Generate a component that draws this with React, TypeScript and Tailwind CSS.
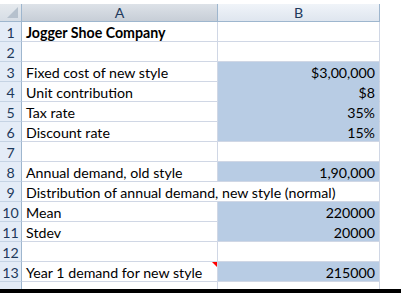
import React from "react";

type Row = { n: number; a?: string; b?: string; fill?: boolean; bold?: boolean; span?: boolean; note?: boolean };

const rows: Row[] = [
  { n: 1, a: "Jogger Shoe Company", bold: true },
  { n: 2 },
  { n: 3, a: "Fixed cost of new style", b: "$3,00,000", fill: true },
  { n: 4, a: "Unit contribution", b: "$8", fill: true },
  { n: 5, a: "Tax rate", b: "35%", fill: true },
  { n: 6, a: "Discount rate", b: "15%", fill: true },
  { n: 7 },
  { n: 8, a: "Annual demand, old style", b: "1,90,000", fill: true },
  { n: 9, a: "Distribution of annual demand, new style (normal)", span: true },
  { n: 10, a: "Mean", b: "220000", fill: true },
  { n: 11, a: "Stdev", b: "20000", fill: true },
  { n: 12 },
  { n: 13, a: "Year 1 demand for new style", b: "215000", fill: true, note: true },
];

export default function App() {
  const font = { fontFamily: "Lato, 'Liberation Sans', sans-serif" };
  return (
    <div className="w-[401px] h-[293px] bg-white flex flex-col overflow-hidden text-[14.2px] text-black" style={font}>
      <div className="h-[4px]" />
      <div className="grid grid-cols-[22px_196px_162px] w-[380px]">
        {/* header */}
        <div className="relative h-[18px] bg-gradient-to-b from-[#e6eaee] to-[#d6dde5] border-r border-b border-[#9eb6ce]">
          <div className="absolute right-[3px] bottom-[3px] w-0 h-0 border-l-[11px] border-l-transparent border-b-[11px] border-b-[#b6c1cd]" />
        </div>
        <div className="h-[18px] flex items-end justify-center bg-gradient-to-b from-[#dde2e8] to-[#c7ced7] border-r border-b border-[#9eb6ce] text-[#1e395b] leading-none">
          <span className="mb-[1px]">A</span>
        </div>
        <div className="h-[18px] flex items-end justify-center bg-gradient-to-b from-[#f0f4f9] to-[#dfe6ef] border-r border-b border-[#9eb6ce] text-[#1e395b] leading-none">
          <span className="mb-[1px]">B</span>
        </div>

        {rows.map((r, i) => {
          const next = rows[i + 1];
          const bottomFill = r.fill && next && next.fill;
          return (
            <React.Fragment key={r.n}>
              <div className="h-[20px] flex items-end justify-center bg-[#e4ecf7] border-r border-b border-r-[#9eb6ce] border-b-[#c5d3e4] text-[#1e395b] leading-none">
                <span className="mb-[1px]">{r.n}</span>
              </div>
              {r.span ? (
                <div className="col-span-2 h-[20px] flex items-end pl-[4px] border-r border-b border-[#d0d7e5] whitespace-nowrap leading-none">
                  <span className="mb-[1px]">{r.a}</span>
                </div>
              ) : (
                <>
                  <div className="relative h-[20px] flex items-end pl-[4px] border-r border-b border-[#d0d7e5] whitespace-nowrap leading-none">
                    <span className={`mb-[1px] ${r.bold ? "font-bold" : ""}`}>{r.a}</span>
                    {r.note && (
                      <div className="absolute right-0 top-0 w-0 h-0 border-l-[5px] border-l-transparent border-t-[5px] border-t-[#ff0000]" />
                    )}
                  </div>
                  <div
                    className={`h-[20px] flex items-end justify-end pr-[4px] border-r border-b border-r-[#d0d7e5] leading-none ${
                      r.fill ? "bg-[#b8cce4]" : ""
                    } ${bottomFill ? "border-b-[#b8cce4]" : "border-b-[#d0d7e5]"}`}
                  >
                    <span className="mb-[1px]">{r.b}</span>
                  </div>
                </>
              )}
            </React.Fragment>
          );
        })}
        <div className="h-[7px] bg-[#e4ecf7] border-r border-r-[#9eb6ce]" />
        <div className="h-[7px] border-r border-[#d0d7e5]" />
        <div className="h-[7px] border-r border-[#d0d7e5]" />
      </div>
      <div className="flex-1 bg-black" />
    </div>
  );
}
